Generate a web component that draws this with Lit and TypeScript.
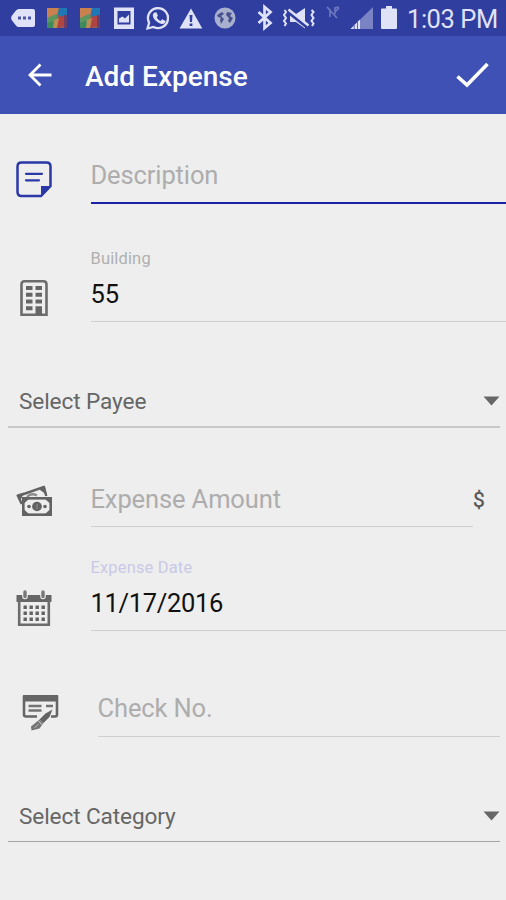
import { LitElement, html, svg, css, nothing, TemplateResult, SVGTemplateResult } from "lit";
import { customElement, property } from "lit/decorators.js";

const mosaic = svg`
  <rect x="0" y="8" width="20" height="20" fill="#7d6a68"/>
  <path d="M0 8h12l-2 7-10 4z" fill="#c9824f"/>
  <path d="M0 18l9-4 2 3-5 11H0z" fill="#5b9560"/>
  <path d="M12 8h8v8l-7 1-2-3z" fill="#1f78b5"/>
  <path d="M11 17l9-2v10l-8 3H7z" fill="#b04440"/>
  <path d="M0 23l6-2 3 7H0z" fill="#3f8a5a"/>
  <path d="M7 20l5-2-2 10H6z" fill="#b98f55"/>
  <path d="M17 15h3v13h-3z" fill="#6d3f66"/>`;

interface StatusIcon { name: string; width: number; before: number; art: SVGTemplateResult }

const statusIcons: StatusIcon[] = [
  { name: "messages", width: 24, before: 11, art: svg`
    <path d="M8 9h14q2 0 2 2v14q0 2-2 2H8q-2 0-3-1.600L.6 20q-1-2 0-4L5 10.600Q6 9 8 9z" fill="#e0e3f8"/>
    <path d="M7 16.500h3v3H7zm5 0h3v3h-3zm5 0h3v3h-3z" fill="#4a56a8"/>` },
  { name: "app", width: 20, before: 12, art: mosaic },
  { name: "app", width: 20, before: 13, art: mosaic },
  { name: "picture", width: 20, before: 14, art: svg`
    <path fill-rule="evenodd" d="M0 7.500h20v21.500H0zM3.500 11v13.500h13V11z" fill="#e0e3f8"/>
    <path d="M5 22.500v-4l3.500-2 2.500 2 4-4v8z" fill="#e0e3f8"/>` },
  { name: "chat", width: 24, before: 12, art: svg`
    <path d="M1.500 28.500l1.600-5.800A10 10 0 1 1 7.400 27z" fill="none" stroke="#e0e3f8" stroke-width="2.300"/>
    <path d="M8.600 12.400l1.800-.2 1.500 3.500-1.300 1.700q1.400 2.400 4 3.500l1.500-1.700 3.400 1.700c.2 2-1.900 3.300-3.700 3-4.500-.8-8.600-5-9-8.400 0-1.400.8-2.500 1.800-3.100z" fill="#e0e3f8"/>` },
  { name: "warning", width: 24, before: 9, art: svg`
    <path d="M12 8.500L23.300 28.500H.5z" fill="#e0e3f8"/>
    <path d="M10.500 15h3l-.5 7h-2zm.1 8.500h2.800v2.500h-2.800z" fill="#303f9f"/>` },
  { name: "network", width: 22, before: 11, art: svg`
    <circle cx="11" cy="18" r="10.500" fill="#a9b0cf"/>
    <path d="M3 15l5-3 2 2-3 2 3 3-3 5-1-4 1-2-3-1zM13 12l5 1-2 3 3 2-3 5-2-2 1-3-3-3z" fill="#47528d"/>` },
  { name: "bluetooth", width: 17, before: 21, art: svg`
    <path d="M1.500 12l12 11-6 5V7l6 5-12 11" fill="none" stroke="#e0e3f8" stroke-width="2.700"/>` },
  { name: "vibrate", width: 34, before: 8, art: svg`
    <path d="M8 14h6l9-6v20.500L14 22H8z" fill="#e0e3f8"/>
    <path d="M5.500 11.500l20 16" stroke="#303f9f" stroke-width="3.500"/>
    <path d="M6.500 9.500l20 16" stroke="#e0e3f8" stroke-width="2.500"/>
    <path d="M2.500 10l1.500 2-2 3 2 3-2 3 2 2.500-1.500 2.500M29.500 10l2 2-2 3 2 3-2 3 2 2.500-1.500 2.500" fill="none" stroke="#e0e3f8" stroke-width="2"/>` },
  { name: "no data", width: 14, before: 10, art: svg`
    <path d="M1 7l10 11M4 17V9m5 5V8l4-1M9 12l4-4" fill="none" stroke="#6d78c0" stroke-width="1.700"/>` },
  { name: "signal", width: 24, before: 10, art: svg`
    <path d="M23 7v22H.5z" fill="#7a84c5"/>
    <path d="M10 19.500V29H.5z" fill="#e0e3f8"/>
    <path d="M4.200 24v5M7.500 21v8" stroke="#5967b2" stroke-width="1"/>` },
  { name: "battery", width: 16, before: 7, art: svg`
    <path d="M5 6h6v2.500h4q1 0 1 1V28q0 1-1 1H1q-1 0-1-1V9.500q0-1 1-1h4z" fill="#e0e3f8"/>` },
];

const noteIcon = svg`
  <path d="M5.500 1.500h25q4 0 4 4V25L25 35H5.500q-4 0-4-4V5.500q0-4 4-4z" fill="none" stroke="#2a38a8" stroke-width="2.500"/>
  <path d="M25 35V25h9.500z" fill="#2a38a8"/>
  <path d="M10 12.800h16M10 19.300h13" stroke="#2a38a8" stroke-width="2.300" stroke-linecap="round"/>`;

const buildingIcon = svg`
  <path d="M4.500 1.300h19q3 0 3 3v30.400h-25V4.300q0-3 3-3z" fill="none" stroke="#6c6c6c" stroke-width="2.600"/>
  <path d="M6 6h6.500v4H6zm9.500 0H22v4h-6.500zM6 12.700h6.500v4H6zm9.500 0H22v4h-6.500zM6 19.500h6.500v4H6zm9.500 0H22v4h-6.500zM6 26.200h6.500v4H6zM15.500 26.200H22V35h-6.500z" fill="#666"/>`;

const moneyIcon = svg`
  <path d="M5.800 19L2 11 27.500 2l2.800 9" fill="none" stroke="#636363" stroke-width="2.500"/>
  <path d="M1 9.500l7-2-3.500 8zM22 3.500L29 1l2 9z" fill="#636363"/>
  <path d="M11 12q4-4.500 10-1.500" fill="none" stroke="#8a8a8a" stroke-width="2.500"/>
  <rect x="7.300" y="13.300" width="27.400" height="16.400" fill="#eee" stroke="#636363" stroke-width="2.600"/>
  <path d="M8 14h5l-5 4.500zm26 0v4.500L29 14zM8 29v-4.500l5 4.500zm26 0h-5l5-4.500z" fill="#636363"/>
  <ellipse cx="21" cy="21.500" rx="4.900" ry="4.700" fill="#636363"/>
  <circle cx="13" cy="21.500" r="1.800" fill="#636363"/><circle cx="29" cy="21.500" r="1.800" fill="#636363"/>
  <path d="M21 19v5" stroke="#888" stroke-width="1.300"/>`;

const calendarIcon = svg`
  <path d="M.5 5h35v7h-35z" fill="#666"/>
  <path d="M3.200 10v24.700h29.600V10" fill="none" stroke="#6c6c6c" stroke-width="2.600"/>
  <path d="M9 2.500v4M27 2.500v4" stroke="#eee" stroke-width="5.600" stroke-linecap="round"/>
  <path d="M9 2v4.500M27 2v4.500" stroke="#777" stroke-width="3.400" stroke-linecap="round"/>
  <path d="M7.500 15.500h3.400v3.400H7.500zm6 0h3.400v3.400h-3.400zm6 0h3.400v3.400h-3.400zm6 0h3.400v3.400h-3.400zM7.500 21.500h3.400v3.400H7.500zm6 0h3.400v3.400h-3.400zm6 0h3.400v3.400h-3.400zm6 0h3.400v3.400h-3.400zM7.500 27.500h3.400v3.400H7.500zm6 0h3.400v3.400h-3.400zm6 0h3.400v3.400h-3.400zm6 0h3.400v3.400h-3.400z" fill="#636363"/>`;

const checkIcon = svg`
  <path d="M15 22.500H4q-2 0-2-2V3h33v17.500q0 2-2 2h-4" fill="none" stroke="#666" stroke-width="2.600"/>
  <path d="M1 1h35v6.500H1z" fill="#666"/>
  <path d="M6.500 12h13M6.500 16.500h13M24 12h7" stroke="#737373" stroke-width="2.300"/>
  <path d="M30.500 15.500l-3 7.500-6 6-4-3.500 6-6z" fill="#636363"/>
  <path d="M17.500 25.500l4 3.500-4 5.500-8 2-.5-4z" fill="#747474"/>
  <path d="M16 26.500l4.500 4.500" stroke="#ddd" stroke-width="1"/>
  <path d="M12.500 34l4-4" stroke="#bbb" stroke-width="1"/>`;

@customElement("status-bar")
export class StatusBar extends LitElement {
  static styles = css`
    :host { display: flex; height: 36px; background: #303f9f; color: #e0e3f8; }
    svg { display: block; flex: none; overflow: visible; }
    .time { font: 25.500px/36px Roboto, sans-serif; letter-spacing: -.45px; margin-left: 10px; padding-top: 1px; white-space: nowrap; }
  `;
  render() {
    return html`${statusIcons.map(i => html`<svg role="img" aria-label=${i.name} width=${i.width} height="36" style="margin-left:${i.before}px">${i.art}</svg>`)}
      <span class="time">1:03 PM</span>`;
  }
}

@customElement("form-field")
export class FormField extends LitElement {
  @property() label = "";
  @property() value = "";
  @property() hint = "";
  @property() suffix = "";
  @property({ attribute: false }) icon?: TemplateResult;
  static styles = css`
    :host { display: flex; align-items: flex-end; box-sizing: border-box; font-family: Roboto, sans-serif; }
    .icon { flex: none; display: flex; box-sizing: border-box; width: var(--indent, 90.500px); padding: 0 0 var(--icon-bottom, 5px) var(--icon-left, 16px); }
    .field { flex: 1; border-bottom: var(--line, 1px solid #cfcfcf); padding-bottom: var(--gap, 12px); }
    .label { font-size: 16.500px; line-height: 20px; margin-bottom: 10px; color: var(--label, #b0b0b0); letter-spacing: .15px; }
    .text { font-size: 25.500px; line-height: 30px; color: #111; white-space: nowrap; letter-spacing: var(--spacing, -.12px); }
    .hint { color: #adadad; }
    .suffix { width: 33px; box-sizing: border-box; padding: 0 0 14px 0; font-size: 21px; line-height: 26px; color: #555; -webkit-text-stroke: .3px #555; }
  `;
  render() {
    return html`
      <div class="icon">${this.icon}</div>
      <div class="field">
        ${this.label ? html`<div class="label">${this.label}</div>` : nothing}
        ${this.value ? html`<div class="text">${this.value}</div>` : html`<div class="text hint">${this.hint}</div>`}
      </div>
      ${this.suffix ? html`<div class="suffix">${this.suffix}</div>` : nothing}`;
  }
}

@customElement("select-field")
export class SelectField extends LitElement {
  @property() text = "";
  static styles = css`
    :host { display: flex; align-items: flex-end; box-sizing: border-box; padding: 0 6px 0 8px; font-family: Roboto, sans-serif; }
    .box { flex: 1; display: flex; align-items: center; justify-content: space-between; padding: 0 0 11px 11px; border-bottom: var(--line, 2px solid #c8c8c8); }
    .text { font-size: 22.600px; line-height: 26px; letter-spacing: -.1px; color: #666; white-space: nowrap; }
    svg { display: block; margin-bottom: 2px; }
  `;
  render() {
    return html`<div class="box"><span class="text">${this.text}</span>
      <svg width="17" height="10"><path d="M.5.500h16L8.500 9.500z" fill="#666"/></svg></div>`;
  }
}

@customElement("app-root")
export class AppRoot extends LitElement {
  static styles = css`
    :host { display: flex; flex-direction: column; height: 900px; background: #eee; overflow: hidden; font-family: Roboto, sans-serif; }
    .appbar { display: flex; align-items: center; height: 78px; box-sizing: border-box; padding: 0 17px 0 28px; background: #3f51b5; color: #fff; }
    .title { flex: 1; margin-left: 33px; padding-top: 3px; font-size: 28px; line-height: 34px; font-weight: 500; }
    svg { display: block; }
    form-field, select-field { flex: none; }
    .description { height: 90px; --line: 2px solid #1c22a6; --icon-bottom: 6px; }
    .building { height: 118px; --icon-left: 20px; --icon-bottom: 6px; }
    .payee { height: 106px; }
    .amount { height: 99px; --icon-bottom: 10px; }
    .date { height: 104px; --label: #c9c9e6; --icon-bottom: 4px; --spacing: -.32px; }
    .check { height: 106px; padding-right: 6px; --gap: 13px; --indent: 97.500px; --icon-left: 22px; --icon-bottom: 6px; }
    .category { height: 105px; --line: 1px solid #a4a4a4; }
  `;
  render() {
    return html`
      <status-bar></status-bar>
      <header class="appbar">
        <svg width="24" height="24"><path d="M23.500 12H2M12.500 1.500L2 12l10.500 10.500" fill="none" stroke="#fff" stroke-width="2.800"/></svg>
        <span class="title">Add Expense</span>
        <svg width="33" height="26"><path d="M1.500 14.500l9.500 8.500L31.500 2" fill="none" stroke="#fff" stroke-width="3.600"/></svg>
      </header>
      <form-field class="description" hint="Description" .icon=${html`<svg width="36" height="37">${noteIcon}</svg>`}></form-field>
      <form-field class="building" label="Building" value="55" .icon=${html`<svg width="28" height="36">${buildingIcon}</svg>`}></form-field>
      <select-field class="payee" text="Select Payee"></select-field>
      <form-field class="amount" hint="Expense Amount" suffix="$" .icon=${html`<svg width="36" height="32">${moneyIcon}</svg>`}></form-field>
      <form-field class="date" label="Expense Date" value="11/17/2016" .icon=${html`<svg width="36" height="37">${calendarIcon}</svg>`}></form-field>
      <form-field class="check" hint="Check No." .icon=${html`<svg width="37" height="37">${checkIcon}</svg>`}></form-field>
      <select-field class="category" text="Select Category"></select-field>`;
  }
}
